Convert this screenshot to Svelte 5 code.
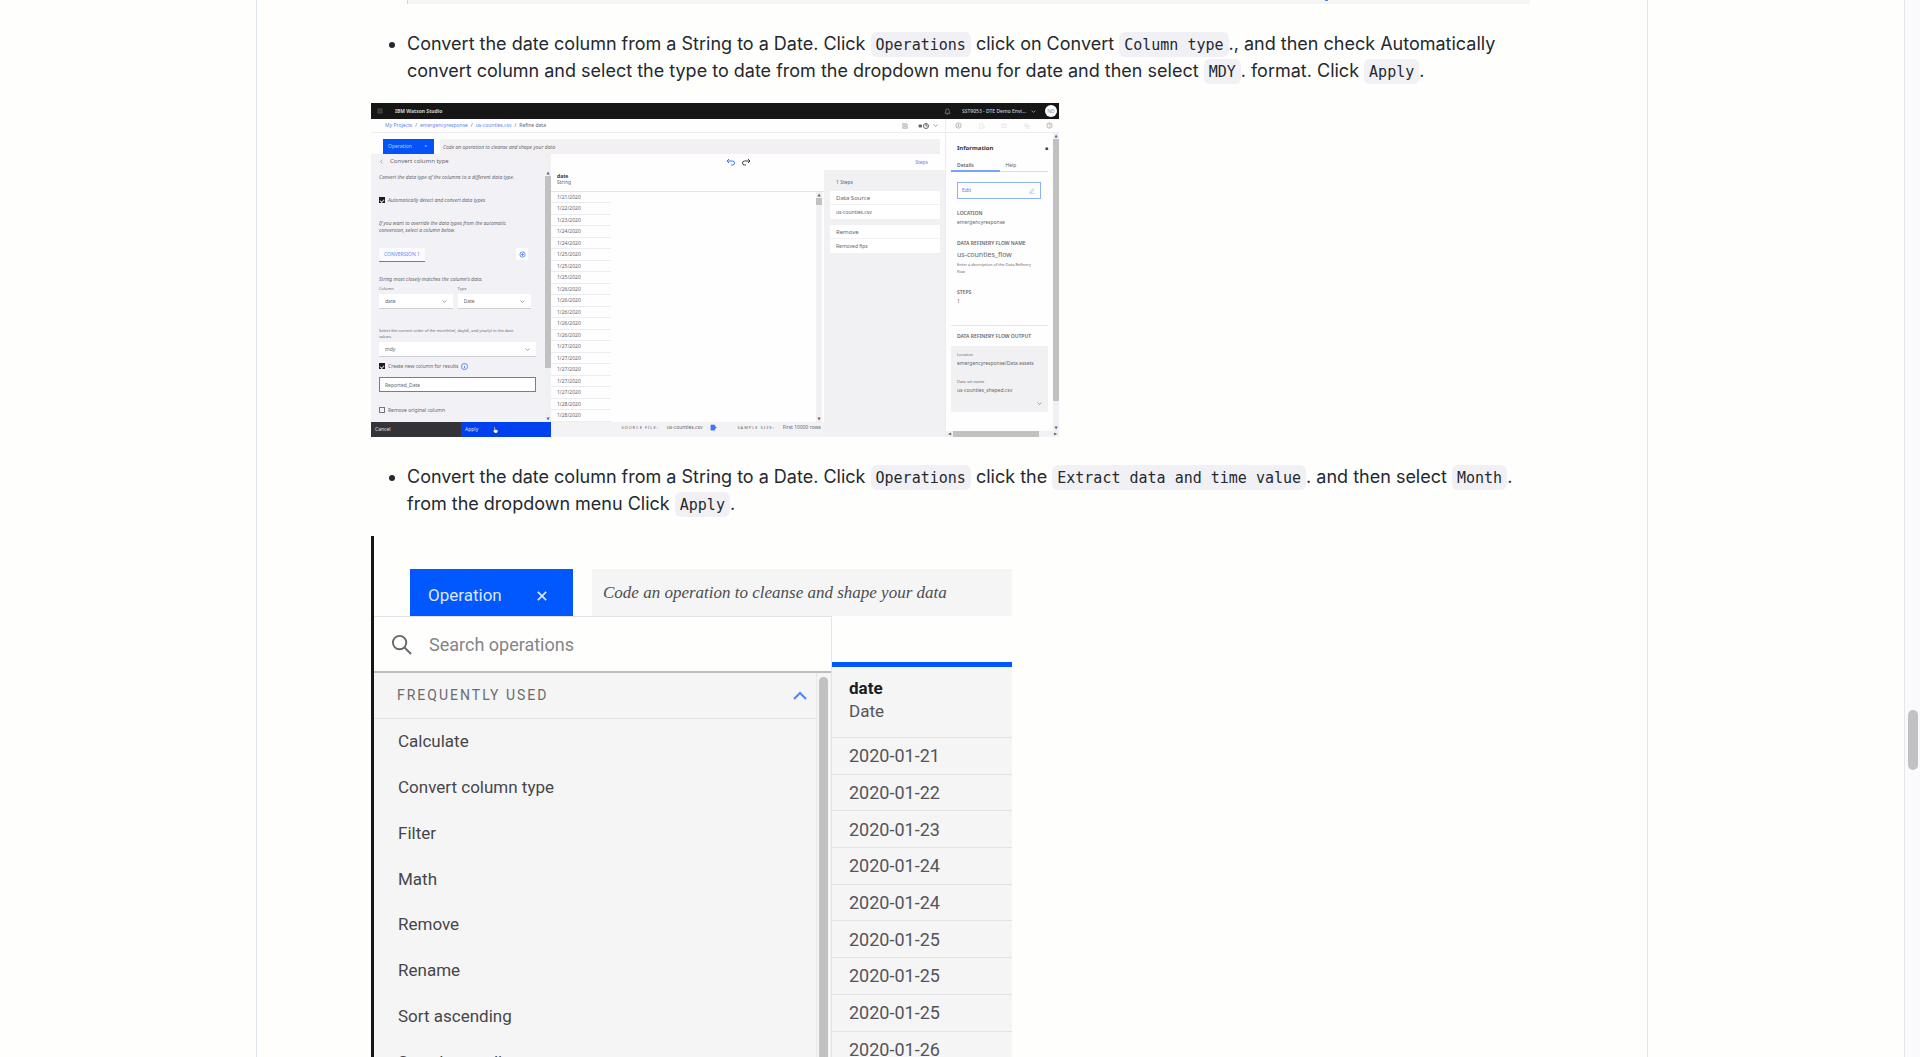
<script>
  const shortDates = [
    '1/21/2020', '1/22/2020', '1/23/2020', '1/24/2020', '1/24/2020',
    '1/25/2020', '1/25/2020', '1/25/2020', '1/26/2020', '1/26/2020',
    '1/26/2020', '1/26/2020', '1/26/2020', '1/27/2020', '1/27/2020',
    '1/27/2020', '1/27/2020', '1/27/2020', '1/28/2020', '1/28/2020'
  ];
  const isoDates = [
    '2020-01-21', '2020-01-22', '2020-01-23', '2020-01-24', '2020-01-24',
    '2020-01-25', '2020-01-25', '2020-01-25', '2020-01-26'
  ];
  const operations = [
    'Calculate', 'Convert column type', 'Filter', 'Math', 'Remove',
    'Rename', 'Sort ascending', 'Sort descending'
  ];
</script>

{#snippet chevron(dir)}
  <svg class="chev {dir}" viewBox="0 0 16 16" aria-hidden="true"><path d="M2 5l6 6 6-6" /></svg>
{/snippet}

<div class="page">
  <div class="scroller">
    <main class="article">
      <div class="cut"><span class="cut-mark"></span></div>

      <ul>
        <li>
          Convert the date column from a String to a Date. Click <code>Operations</code> click on Convert
          <code>Column type</code>., and then check Automatically convert column and select the type to date from the
          dropdown menu for date and then select <code>MDY</code>. format. Click <code>Apply</code>.
        </li>
      </ul>

      <section class="studio" aria-label="Convert column type">
        <header class="s-top">
          <svg class="i6" viewBox="0 0 16 16"><path d="M1 3h14M1 8h14M1 13h14" /></svg>
          <b>IBM Watson Studio</b>
          <span class="grow"></span>
          <svg class="i7" viewBox="0 0 16 16"><path d="M2 12h12l-2-3V6a4 4 0 0 0-8 0v3zM6 14h4" /></svg>
          <span class="account">SST9053 - DTE Demo Envi...</span>
          {@render chevron('down')}
          <span class="avatar">ND</span>
        </header>

        <div class="s-crumbs">
          <nav>
            <a href="#projects">My Projects</a><i>/</i><a href="#er">emergencyresponse</a><i>/</i><a href="#csv">us-counties.csv</a><i>/</i><span>Refine data</span>
          </nav>
          <div class="s-tools">
            <svg class="i6" viewBox="0 0 16 16"><path d="M2 2h10l2 2v10H2zM5 2v4h6V2M5 14V9h6v5" /></svg>
            <svg class="run" viewBox="0 0 24 16"><path class="fill" d="M2 6h5v4H2z" /><circle cx="16" cy="8" r="5" /><path d="M16 4v4h3" /></svg>
            {@render chevron('down')}
          </div>
          <div class="s-icons">
            <svg class="i7" viewBox="0 0 16 16"><circle cx="8" cy="8" r="6" /><path d="M8 4v5M5 8l3 3 3-3" /></svg>
            <svg class="i6 faint" viewBox="0 0 16 16"><path d="M2 2h8v12H2zM10 8h4v6" /></svg>
            <svg class="i6 faint" viewBox="0 0 16 16"><path d="M2 3h12v9H2zM5 6h6" /></svg>
            <svg class="i6 faint" viewBox="0 0 16 16"><path d="M2 2h7v7H2zM7 7h7v7H7z" /></svg>
            <svg class="i7" viewBox="0 0 16 16"><circle cx="8" cy="8" r="6" /><path d="M6 6a2 2 0 1 1 2 3v1M8 11v1" /></svg>
          </div>
        </div>

        <div class="s-main">
          <div class="s-work">
            <div class="s-bar">
              <button class="s-op">Operation <span>×</span></button>
              <input class="s-code" aria-label="Code an operation" placeholder="Code an operation to cleanse and shape your data" />
            </div>
            <div class="s-body">
              <div class="s-left">
                <div class="s-form">
                  <div class="fields">
                    <div class="back">{@render chevron('left')}Convert column type</div>
                    <p class="desc it">Convert the data type of the columns to a different data type.</p>
                    <label class="check it c1"><input type="checkbox" checked />Automatically detect and convert data types</label>
                    <p class="override it">If you want to override the data types from the automatic<br />conversion, select a column below.</p>
                    <div class="tabrow">
                      <button class="conv">CONVERSION 1</button>
                      <button class="add" aria-label="Add conversion"><svg class="i7" viewBox="0 0 16 16"><circle cx="8" cy="8" r="6" /><path d="M8 5v6M5 8h6" /></svg></button>
                    </div>
                    <p class="match it">String most closely matches the column's data.</p>
                    <div class="pair">
                      <div><label for="col">Column</label><div class="sel"><select id="col"><option>date</option></select>{@render chevron('down')}</div></div>
                      <div><label for="typ">Type</label><div class="sel"><select id="typ"><option>Date</option></select>{@render chevron('down')}</div></div>
                    </div>
                    <label class="order" for="ord">Select the current order of the month(m), day(d), and year(y) in the date<br />values.</label>
                    <div class="sel"><select id="ord"><option>mdy</option></select>{@render chevron('down')}</div>
                    <label class="check c2"><input type="checkbox" checked />Create new column for results
                      <svg class="i7 info" viewBox="0 0 16 16"><circle cx="8" cy="8" r="7" /><path d="M8 7v5M8 4v1" /></svg></label>
                    <input class="result" aria-label="New column name" value="Reported_Date" />
                    <label class="check c3"><input type="checkbox" />Remove original column</label>
                  </div>
                  <div class="vs"><i>▲</i><div class="vthumb long"></div><span class="grow"></span><i>▼</i></div>
                </div>
                <div class="s-btns">
                  <button>Cancel</button>
                  <button class="apply">Apply
                    <svg class="hand" viewBox="0 0 16 16"><path d="M5 1h2v6l6 1v4l-2 3H6L2 9h3z" /></svg></button>
                </div>
              </div>

              <div class="s-right">
                <div class="s-undo">
                  <span class="grow"></span>
                  <svg class="undo" viewBox="0 0 20 14"><path d="M6 1L2 5l4 4M2 5h11a4 4 0 0 1 0 8h-3" /></svg>
                  <svg class="redo" viewBox="0 0 20 14"><path d="M14 1l4 4-4 4M18 5H7a4 4 0 0 0 0 8h3" /></svg>
                  <a href="#steps">Steps</a>
                </div>
                <div class="s-cols">
                  <div class="s-data">
                    <div class="s-head"><b>date</b><span>String</span></div>
                    <div class="s-grid">
                      <table class="s-table"><tbody>{#each shortDates as d}<tr><td>{d}</td></tr>{/each}</tbody></table>
                      <div class="vs"><i>▲</i><div class="vthumb"></div><span class="grow"></span><i>▼</i></div>
                    </div>
                    <footer class="s-foot">
                      <span class="sp">SOURCE FILE:</span><span class="src">us-counties.csv</span>
                      <svg class="i7 play" viewBox="0 0 16 16"><path d="M2 2h9v3l4 3-4 3v3H2z" /></svg>
                      <span class="sp">SAMPLE SIZE:</span><span>First 10000 rows</span>
                    </footer>
                  </div>
                  <aside class="s-steps">
                    <small>1 Steps</small>
                    <div class="card"><b>Data Source</b><span>us-counties.csv</span></div>
                    <div class="card"><b>Remove</b><span>Removed fips</span></div>
                  </aside>
                </div>
              </div>
            </div>
          </div>

          <aside class="s-info">
            <div class="i-row">
              <div class="i-body">
                <div class="i-title"><b>Information</b><span>■</span></div>
                <div class="i-tabs"><button class="on">Details</button><button>Help</button></div>
                <button class="edit">Edit <svg class="i6" viewBox="0 0 16 16"><path d="M3 10l7-8 3 3-7 7H3zM2 15h12" /></svg></button>
                <dl>
                  <dt>LOCATION</dt><dd>emergencyresponse</dd>
                  <dt class="d2">DATA REFINERY FLOW NAME</dt><dd class="big">us-counties_flow</dd>
                  <dd class="tiny">Enter a description of the Data Refinery<br />flow</dd>
                  <dt class="d3">STEPS</dt><dd>1</dd>
                </dl>
                <h5>DATA REFINERY FLOW OUTPUT</h5>
                <div class="out">
                  <small>Location</small><span>emergencyresponse/Data assets</span>
                  <small class="o2">Data set name</small><span>us-counties_shaped.csv</span>
                  {@render chevron('down')}
                </div>
              </div>
              <div class="vs"><i>▲</i><div class="vthumb tall"></div><span class="grow"></span><i>▼</i></div>
            </div>
            <div class="hs"><i>◀</i><div class="hthumb"></div><span class="grow"></span><i>▶</i></div>
          </aside>
        </div>
      </section>

      <ul>
        <li>
          Convert the date column from a String to a Date. Click <code>Operations</code> click the
          <code>Extract data and time value</code>. and then select <code>Month</code>. from the dropdown menu Click
          <code>Apply</code>.
        </li>
      </ul>

      <section class="ops" aria-label="Operations menu">
        <div class="o-bar">
          <button class="o-btn">Operation
            <svg viewBox="0 0 12 12"><path d="M1 1l10 10M11 1L1 11" /></svg></button>
          <input class="o-code" aria-label="Operation code" placeholder="Code an operation to cleanse and shape your data" />
        </div>
        <div class="o-main">
          <div class="o-menu">
            <label class="o-search">
              <svg viewBox="0 0 22 22"><circle cx="9" cy="9" r="7" /><path d="M14 14l7 7" /></svg>
              <input aria-label="Search operations" placeholder="Search operations" />
            </label>
            <div class="o-list">
              <div class="o-items">
                <button class="o-group">FREQUENTLY USED {@render chevron('up')}</button>
                <div class="o-rows">
                  {#each operations as op}<button class="o-item">{op}</button>{/each}
                </div>
              </div>
              <div class="o-track"><div class="o-thumb"></div></div>
            </div>
          </div>
          <div class="o-data">
            <div class="o-head"><b>date</b><span>Date</span></div>
            <table><tbody>{#each isoDates as d}<tr><td>{d}</td></tr>{/each}</tbody></table>
          </div>
        </div>
      </section>
    </main>
  </div>
  <div class="rail"><div class="thumb"></div></div>
</div>

<style>
  :global(body) { margin: 0; background: #fefefd; }
  * { box-sizing: border-box; }
  p, ul, dl, dd, h5 { margin: 0; }
  button, input, select { font: inherit; color: inherit; border: 0; border-radius: 0; background: none; padding: 0; margin: 0; text-align: left; outline: 0; }
  a { text-decoration: none; color: #5c88f7; }
  svg { fill: none; stroke: currentColor; flex: none; display: block; }
  .grow { flex: 1; }

  .page { display: flex; height: 100vh; overflow: hidden; background: #fefefd; }
  .scroller { flex: 1; min-width: 0; overflow: hidden; }
  .article { width: 100%; max-width: 1392px; min-height: 100vh; margin: 0 auto; padding: 0 117px 0 114px; border: 1px solid #dfe5ee; border-width: 0 1px; font: 18px/27px Inter, sans-serif; color: #24292f; }
  .rail { width: 16px; background: #fafafd; border-left: 1px solid #e6e6ea; padding: 710px 2px 0 3px; }
  .thumb { height: 60px; border-radius: 5px; background: #c1c1c3; }

  .cut { height: 4px; margin-left: 36px; background: #f5f5f5; border-left: 1px solid #d5d5d5; display: flex; }
  .cut-mark { width: 3px; height: 1px; margin-left: 917px; background: #4a7dff; }
  ul { padding: 26px 0 19px 36px; }
  code { font: 15px/23px "DejaVu Sans Mono", monospace; background: #f1f1f5; border-radius: 6px; padding: 4px 5px 3px; }

  /* Watson Studio window */
  .studio { max-width: 688px; height: 334px; display: flex; flex-direction: column; font: 5px/7px "Noto Sans", sans-serif; color: #66666c; background: #fefefe; overflow: hidden; }
  .i6 { width: 6px; height: 6px; }
  .i7 { width: 7px; height: 7px; }
  .faint { opacity: 0.3; }
  .chev { width: 5px; height: 5px; stroke-width: 2; }
  .chev.left { transform: rotate(90deg); color: #4a7dff; }
  .chev.up { transform: rotate(180deg); }
  .s-top { height: 16px; flex: none; background: #161616; color: #cfcfcf; display: flex; align-items: center; padding: 0 2px 0 6px; font-weight: 500; }
  .s-top b { margin-left: 12px; }
  .account { margin: 0 5px 0 11px; }
  .avatar { width: 12px; height: 12px; border-radius: 6px; margin-left: 9px; background: #fff; color: #999; line-height: 12px; text-align: center; }
  .s-crumbs { height: 14px; flex: none; display: flex; align-items: center; border-bottom: 1px solid #ececef; }
  .s-crumbs nav { flex: 1; padding-left: 14px; display: flex; gap: 3px; }
  .s-crumbs i { font-style: normal; }
  .s-tools { display: flex; align-items: center; gap: 10px; padding-right: 7px; height: 14px; border-right: 1px solid #ececef; }
  .s-tools .chev { margin-left: -7px; }
  .run { width: 12px; height: 8px; stroke-width: 2; }
  .fill { fill: currentColor; }
  .s-icons { width: 113px; display: flex; justify-content: space-between; padding: 0 6px 0 9px; align-items: center; }
  .s-main { flex: 1; display: flex; min-height: 0; }
  .s-work { flex: 1; min-width: 0; display: flex; flex-direction: column; }
  .s-bar { display: flex; gap: 6px; padding: 6px 5px 0 12px; }
  .s-op { width: 51px; height: 15px; background: #0353f8; color: #b9cdff; display: flex; justify-content: space-between; align-items: center; padding: 0 7px 0 5px; }
  .s-code { flex: 1; height: 15px; background: #f2f0f2; font-style: italic; padding-left: 3px; }
  .s-code::placeholder { color: #6b6b70; opacity: 1; }
  .s-body { flex: 1; display: flex; min-height: 0; }
  .s-left { width: 180px; display: flex; flex-direction: column; background: #f2f2f6; }
  .s-form { flex: 1; display: flex; min-height: 0; overflow: hidden; }
  .fields { flex: 1; padding: 0 9px 0 8px; white-space: nowrap; }
  .back { height: 14px; display: flex; align-items: center; gap: 6px; font-size: 6px; }
  .it { font-style: italic; }
  .desc { margin-top: 4px; line-height: 10px; }
  .check { display: flex; align-items: center; gap: 3px; height: 10px; }
  .check input { appearance: none; width: 6px; height: 6px; border: 1px solid #77777c; display: grid; place-items: center; }
  .check input:checked { background: #1c1c1e; border-color: #1c1c1e; }
  .check input:checked::after { content: ""; width: 3px; height: 2px; border: 1px solid #d8d8da; border-width: 0 0 1px 1px; transform: rotate(-45deg); }
  .c1 { margin-top: 13px; }
  .override { margin-top: 15px; }
  .tabrow { display: flex; justify-content: space-between; margin-top: 14px; padding-right: 8px; }
  .conv { height: 14px; width: 46px; background: #fbfbfd; border-bottom: 1px solid #4a7dff; color: #5c88f7; text-align: center; }
  .add { width: 12px; height: 12px; background: #fff; color: #4a7dff; display: flex; align-items: center; justify-content: center; }
  .add .i7 { stroke-width: 2; }
  .match { margin-top: 13px; line-height: 8px; }
  .pair { margin: 3px 5px 0 0; display: flex; gap: 5px; }
  .pair > div { flex: 1; }
  .pair label { display: block; line-height: 6px; margin-bottom: 2px; font-size: 4px; }
  .sel { display: flex; align-items: center; height: 15px; background: #fff; border-bottom: 1px solid #cfcfd4; padding: 0 6px; }
  .sel select { flex: 1; appearance: none; }
  .order { display: block; margin: 19px 0 2px; line-height: 6px; font-size: 4px; }
  .c2 { margin-top: 4px; }
  .info { color: #4a7dff; stroke-width: 2; }
  .result { display: block; width: 100%; height: 15px; margin-top: 6px; background: #fff; border: 1px solid #4a7dff; padding-left: 5px; }
  .c3 { margin-top: 13px; }
  .s-btns { display: flex; height: 15px; color: #e0e0e0; }
  .s-btns button { flex: 1; background: #343438; padding-left: 4px; }
  .s-btns .apply { background: #0040ee; display: flex; align-items: center; gap: 14px; }
  .hand { width: 7px; height: 8px; fill: #fff; stroke: #555; }
  .vs { width: 6px; display: flex; flex-direction: column; align-items: stretch; background: #f1f1f3; }
  .vs i, .hs i { font: 4px/6px "DejaVu Sans", sans-serif; text-align: center; color: #666; }
  .vthumb { height: 7px; background: #c1c1c1; }
  .vthumb.long { height: 192px; }
  .vthumb.tall { height: 262px; }
  .s-left .vs { padding-top: 16px; }
  .s-right { flex: 1; min-width: 0; display: flex; flex-direction: column; }
  .s-undo { height: 16px; display: flex; align-items: center; padding-right: 17px; }
  .undo, .redo { width: 10px; height: 8px; stroke-width: 2; margin-right: 5px; color: #3c3c40; }
  .undo { color: #3c74ff; }
  .s-undo a { margin-left: 159px; }
  .s-cols { flex: 1; display: flex; min-height: 0; }
  .s-data { flex: 1; display: flex; flex-direction: column; }
  .s-head { height: 22px; display: flex; flex-direction: column; padding: 3px 0 0 6px; line-height: 6px; border-bottom: 1px solid #e6e6e9; }
  .s-head b { color: #333; }
  .s-grid { flex: 1; display: flex; justify-content: space-between; }
  .s-grid .vs { margin-right: 2px; }
  .s-foot { height: 15px; background: #f3f3f6; display: flex; align-items: center; padding: 0 3px 5px 0; justify-content: flex-end; gap: 8px; }
  .sp { letter-spacing: 1px; font-size: 4px; }
  .play { fill: #3c74ff; color: #3c74ff; margin-right: 12px; }
  .s-steps { width: 121px; background: #f1f1f3; padding: 8px 5px 0 6px; }
  .s-steps small { display: block; font-size: 5px; line-height: 8px; padding-left: 6px; margin-bottom: 5px; }
  .card { background: #fff; margin-bottom: 6px; border-radius: 1px; }
  .card b, .card span { display: block; height: 14px; line-height: 14px; padding-left: 6px; }
  .card b { font-weight: 400; font-size: 6px; border-bottom: 1px solid #f1f1f3; }
  .s-info { width: 114px; display: flex; flex-direction: column; border-left: 1px solid #ececef; }
  .i-row { flex: 1; display: flex; min-height: 0; overflow: hidden; }
  .i-body { flex: 1; padding: 10px 5px 0; white-space: nowrap; overflow: hidden; }
  .i-title { display: flex; justify-content: space-between; line-height: 10px; padding: 0 0 0 6px; color: #333; font-size: 6px; }
  .i-title span { font-size: 5px; }
  .i-tabs { display: flex; margin-top: 6px; }
  .i-tabs button { flex: 1; height: 13px; line-height: 10px; padding-left: 6px; border-bottom: 1px solid #dcdce0; }
  .i-tabs .on { border-bottom: 2px solid #7ba1ff; font-weight: 600; }
  .edit { width: 84px; height: 17px; margin: 10px 0 0 6px; border: 1px solid #8fb0ff; color: #4a7dff; display: flex; justify-content: space-between; align-items: center; padding: 0 5px 0 4px; }
  dl { margin: 10px 0 0 6px; height: 116px; }
  dt { font-weight: 600; line-height: 9px; font-size: 5px; }
  dd { line-height: 9px; }
  .d2 { margin-top: 12px; }
  .big { font-size: 7px; line-height: 13px; }
  .tiny { font-size: 4px; line-height: 7px; }
  .d3 { margin-top: 13px; }
  h5 { font-size: 5px; line-height: 9px; padding: 6px 0 5px 6px; border-top: 1px solid #e6e6e9; font-weight: 600; }
  .out { background: #f1f1f3; height: 66px; padding: 4px 6px; display: flex; flex-direction: column; }
  .out small { font-size: 4px; line-height: 9px; }
  .out span { line-height: 9px; }
  .out .o2 { margin-top: 9px; }
  .out .chev { align-self: flex-end; margin-top: 6px; }
  .hs { height: 6px; display: flex; background: #f1f1f3; }
  .hs i { width: 7px; }
  .hthumb { width: 86px; background: #c1c1c1; }

  /* Operations window */
  .ops { max-width: 641px; border-left: 3px solid #161616; padding-top: 33px; font: 17px/23px Roboto, sans-serif; color: #54545a; }
  .o-bar { display: flex; gap: 19px; padding-left: 36px; }
  .o-btn { width: 163px; height: 47px; background: #0058fe; color: #dce7ff; display: flex; justify-content: space-between; align-items: center; padding: 6px 26px 0 18px; }
  .o-btn svg { width: 10px; height: 10px; stroke-width: 2; }
  .o-code { flex: 1; height: 47px; background: #f5f5f5; font: italic 17px/24px "Liberation Serif", serif; padding-left: 11px; }
  .o-code::placeholder { color: #4c4c50; opacity: 1; }
  .o-main { display: flex; }
  .o-menu { flex: 1; border: 1px solid #e2e2e8; border-width: 1px 1px 0 0; }
  .o-search { display: flex; align-items: center; gap: 17px; height: 56px; padding-left: 17px; border-bottom: 2px solid #bdbdbd; }
  .o-search svg { width: 21px; height: 21px; stroke: #66666a; stroke-width: 2; }
  .o-search input { flex: 1; font-size: 18px; }
  .o-search input::placeholder { color: #85858a; opacity: 1; }
  .o-list { display: flex; background: #f5f5f5; }
  .o-items { flex: 1; }
  .o-group { width: 100%; height: 46px; display: flex; align-items: center; justify-content: space-between; padding: 0 8px 0 23px; font-size: 14px; letter-spacing: 2px; color: #6b6b70; border-bottom: 1px solid #e2e2e8; }
  .o-group .chev { width: 16px; height: 16px; color: #4a86ff; }
  .o-rows { display: grid; height: 366px; grid-auto-rows: 1fr; }
  .o-item { padding-left: 24px; color: #46464a; }
  .o-track { width: 15px; border-left: 1px solid #e8e8ee; padding: 4px 3px 0 2px; }
  .o-thumb { height: 100%; border-radius: 5px 5px 0 0; background: #c1c1c1; }
  .o-data { width: 180px; padding-top: 46px; }
  .o-head { height: 75px; background: #f5f5f5; border-top: 5px solid #0058fe; padding: 10px 0 0 17px; display: flex; flex-direction: column; }
  .o-head b { color: #1c1c1e; }
  table { width: 100%; height: 330px; border-collapse: collapse; background: #f5f5f5; }
  .s-table { width: 60px; height: 230px; background: none; }
  .s-table td { padding: 0 0 0 6px; border-bottom: 1px solid #ececef; }
  .o-data td { border-top: 1px solid #e2e2e6; padding: 0 0 0 17px; font-size: 18px; }
</style>
